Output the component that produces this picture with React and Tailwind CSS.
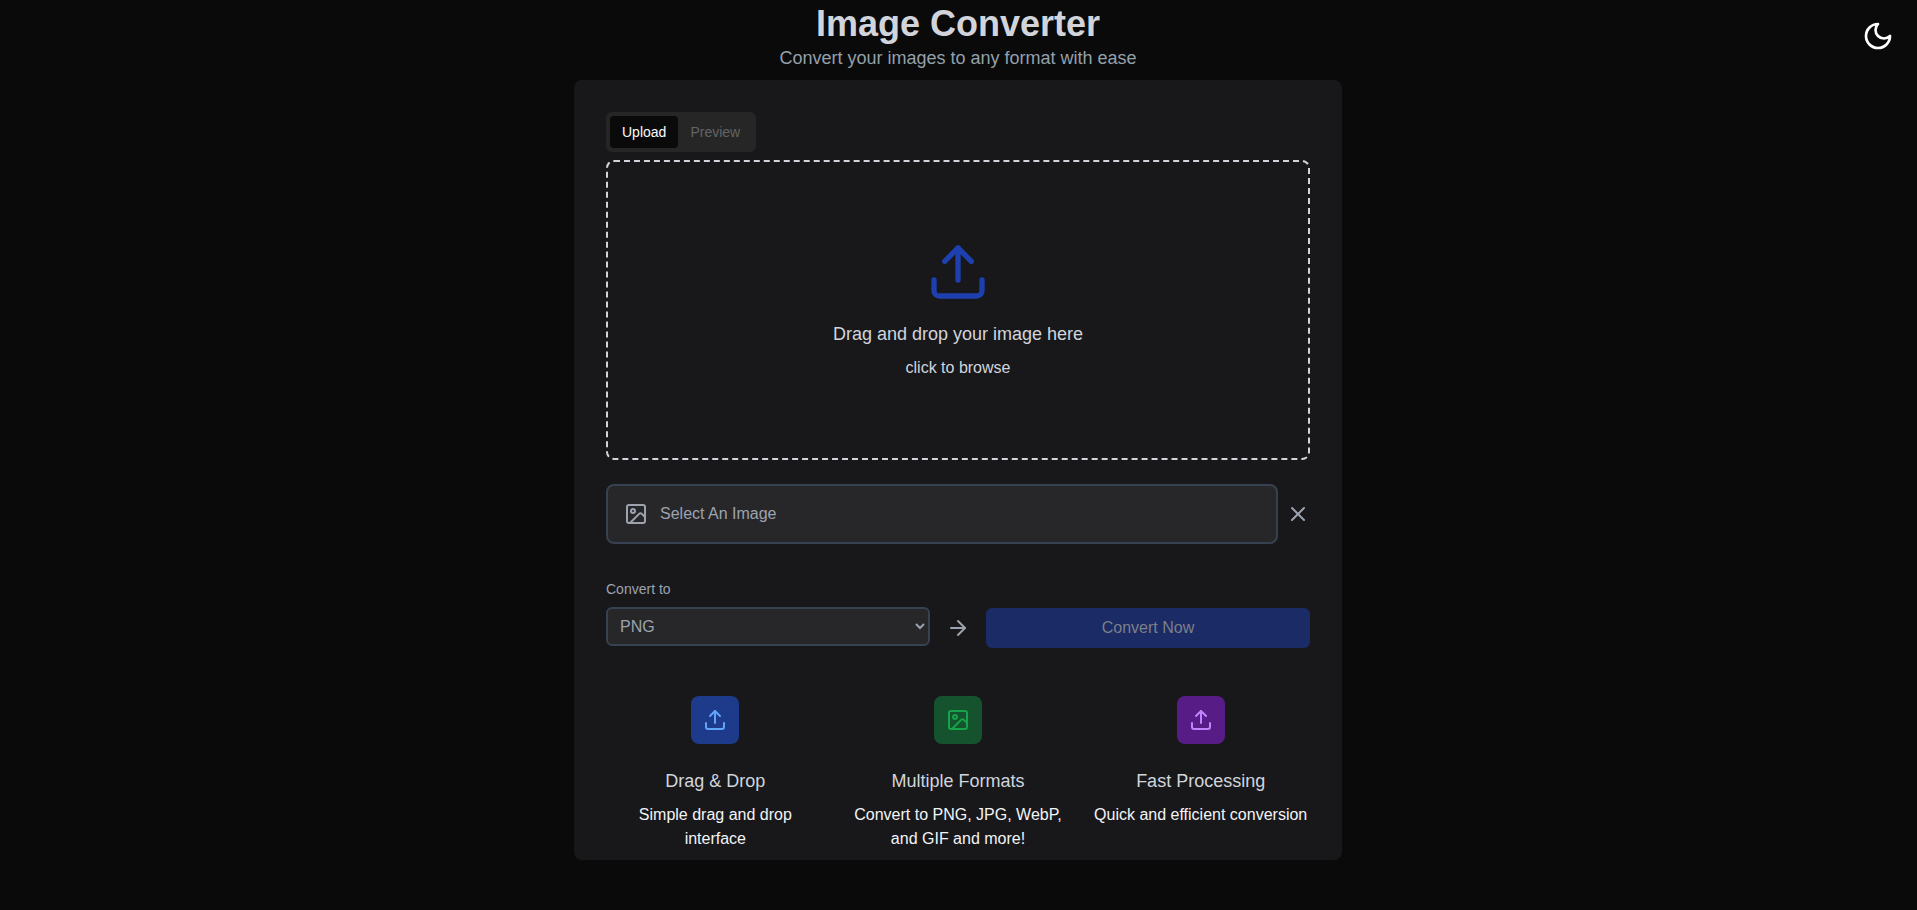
import React from "react";
import { ArrowRight, Image as ImageIcon, Upload, X } from "lucide-react";

function MoonIcon() {
  return (
    <svg width="32" height="32" viewBox="0 0 24 24" fill="none" stroke="currentColor" strokeWidth="2" strokeLinecap="round" strokeLinejoin="round">
      <path d="M12 3a6 6 0 0 0 9 9 9 9 0 1 1-9-9Z" />
    </svg>
  );
}

function Feature({ icon, tile, title, text }) {
  return (
    <div className="flex flex-col items-center text-center">
      <div className={`flex size-12 items-center justify-center rounded-lg ${tile}`}>{icon}</div>
      <h3 className="mt-[23px] text-lg text-[#d1d5db]">{title}</h3>
      <p className="mt-2 text-base text-[#f3f4f6]">{text}</p>
    </div>
  );
}

export default function App() {
  return (
    <div className="flex h-screen flex-col items-center overflow-hidden bg-[#0a0a0a] pr-px font-['Liberation_Sans',Arial,sans-serif]">
      <button className="absolute top-[20px] right-[23px] text-white" aria-label="Toggle theme">
        <MoonIcon />
      </button>
      <header className="flex h-20 shrink-0 flex-col items-center pt-1">
        <h1 className="text-4xl font-bold text-[#d1d5db]">Image Converter</h1>
        <p className="text-lg text-[#94a0aa]">Convert your images to any format with ease</p>
      </header>
      <main className="flex h-[780px] w-3xl shrink-0 flex-col rounded-lg bg-[#18181b] px-8 pt-8">
        <div className="flex h-10 w-[150px] shrink-0 items-center rounded-md bg-[#262626] p-1 text-sm">
          <button className="h-8 rounded-sm bg-[#0a0a0a] px-3 text-[#fafafa]">Upload</button>
          <button className="h-8 px-3 text-[#646464]">Preview</button>
        </div>
        <div className="mt-2 flex h-[300px] shrink-0 flex-col items-center rounded-lg border-2 border-dashed border-[#d1d5db] pt-[78px] text-[#d1d5db]">
          <Upload className="size-16 text-[#1e40af]" />
          <p className="mt-4 text-lg">Drag and drop your image here</p>
          <p className="mt-2 text-base">click to browse</p>
        </div>
        <div className="mt-6 flex items-center gap-2 text-[#9ca3af]">
          <div className="flex h-[60px] flex-1 items-center gap-3 rounded-lg border-2 border-[#374151] bg-[#27272a] px-4">
            <ImageIcon className="size-6" />
            <span>Select An Image</span>
          </div>
          <X className="size-6" />
        </div>
        <label className="mt-[35px] text-sm text-[#9ca3af]" htmlFor="format">Convert to</label>
        <div className="mt-2 grid grid-cols-[1fr_auto_1fr] items-start gap-4 text-[#9ca3af]">
          <select id="format" className="h-[39px] w-full rounded-md border-2 border-[#374151] bg-[#27272a] px-2">
            <option>PNG</option>
          </select>
          <ArrowRight className="mt-[9px] size-6" />
          <button className="mt-px h-10 rounded-md bg-[#1b2b65] text-[#7b808a]">Convert Now</button>
        </div>
        <section className="mt-12 grid grid-cols-3 gap-6">
          <Feature
            icon={<Upload className="size-6 text-[#60a5fa]" />}
            tile="bg-[#1e3a8a]"
            title="Drag & Drop"
            text="Simple drag and drop interface"
          />
          <Feature
            icon={<ImageIcon className="size-6 text-[#16a34a]" />}
            tile="bg-[#14532d]"
            title="Multiple Formats"
            text="Convert to PNG, JPG, WebP, and GIF and more!"
          />
          <Feature
            icon={<Upload className="size-6 text-[#c084fc]" />}
            tile="bg-[#581c87]"
            title="Fast Processing"
            text="Quick and efficient conversion"
          />
        </section>
      </main>
    </div>
  );
}
